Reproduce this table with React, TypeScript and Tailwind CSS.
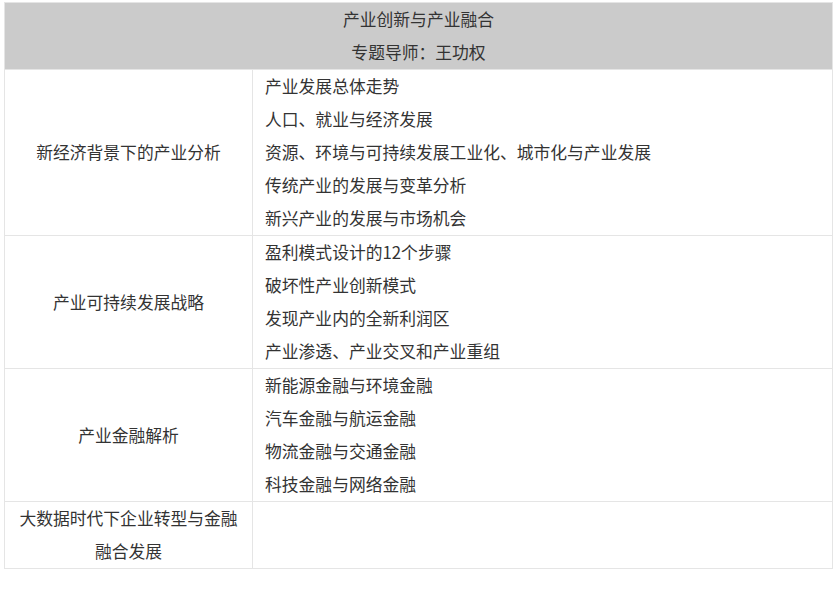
const rows: { title: string[]; items: string[] }[] = [
  {
    title: ["新经济背景下的产业分析"],
    items: [
      "产业发展总体走势",
      "人口、就业与经济发展",
      "资源、环境与可持续发展工业化、城市化与产业发展",
      "传统产业的发展与变革分析",
      "新兴产业的发展与市场机会",
    ],
  },
  {
    title: ["产业可持续发展战略"],
    items: [
      "盈利模式设计的12个步骤",
      "破坏性产业创新模式",
      "发现产业内的全新利润区",
      "产业渗透、产业交叉和产业重组",
    ],
  },
  {
    title: ["产业金融解析"],
    items: [
      "新能源金融与环境金融",
      "汽车金融与航运金融",
      "物流金融与交通金融",
      "科技金融与网络金融",
    ],
  },
  {
    title: ["大数据时代下企业转型与金融", "融合发展"],
    items: [],
  },
];

export default function App() {
  return (
    <div
      className="w-[837px] h-[601px] bg-white pt-[2px] pl-[4px] text-[#333] text-[16.8px] leading-[33px]"
      style={{ fontFamily: '"Noto Sans CJK SC", "Noto Sans", sans-serif' }}
    >
      <table className="w-[829px] border-collapse table-fixed">
        <colgroup>
          <col className="w-[248px]" />
          <col />
        </colgroup>
        <thead>
          <tr>
            <th
              colSpan={2}
              className="bg-[#cbcbcb] border border-[#e5e5e5] font-normal text-center p-0"
            >
              <p>产业创新与产业融合</p>
              <p>专题导师：王功权</p>
            </th>
          </tr>
        </thead>
        <tbody>
          {rows.map((row) => (
            <tr key={row.title[0]}>
              <td className="border border-[#e5e5e5] text-center align-middle py-0 px-[8px]">
                {row.title.map((t) => (
                  <p key={t}>{t}</p>
                ))}
              </td>
              <td className="border border-[#e5e5e5] align-middle p-0 pl-[12px]">
                {row.items.map((it) => (
                  <p key={it}>{it}</p>
                ))}
              </td>
            </tr>
          ))}
        </tbody>
      </table>
    </div>
  );
}
